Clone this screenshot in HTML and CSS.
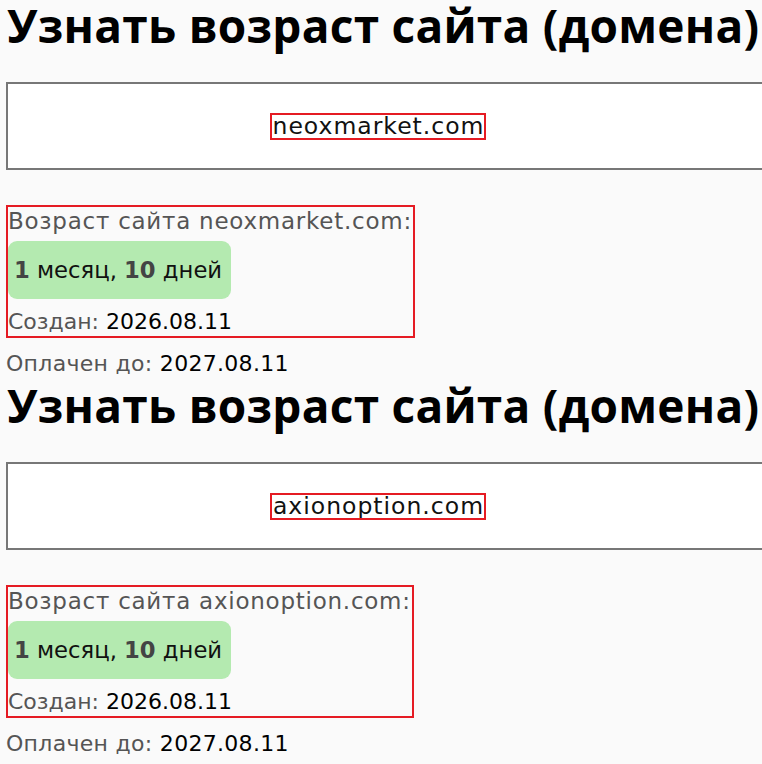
FILE: index.html
```html
<!DOCTYPE html>
<html lang="ru">
<head>
<meta charset="utf-8">
<title>Узнать возраст сайта (домена)</title>
<link rel="stylesheet" href="styles.css">
</head>
<body>
<section class="block">
  <h1 class="title">Узнать возраст сайта (домена)</h1>
  <div class="field"><span class="domain">neoxmarket.com</span></div>
  <div class="result">
    <div class="label">Возраст сайта neoxmarket.com:</div>
    <div class="age"><b class="num">1</b> месяц, <b class="num">10</b> дней</div>
    <div class="line"><span class="key">Создан:</span> <span class="val">2026.08.11</span></div>
  </div>
  <div class="line paid"><span class="key">Оплачен до:</span> <span class="val">2027.08.11</span></div>
</section>
<section class="block">
  <h1 class="title">Узнать возраст сайта (домена)</h1>
  <div class="field"><span class="domain">axionoption.com</span></div>
  <div class="result">
    <div class="label">Возраст сайта axionoption.com:</div>
    <div class="age"><b class="num">1</b> месяц, <b class="num">10</b> дней</div>
    <div class="line"><span class="key">Создан:</span> <span class="val">2026.08.11</span></div>
  </div>
  <div class="line paid"><span class="key">Оплачен до:</span> <span class="val">2027.08.11</span></div>
</section>
</body>
</html>
```

FILE: styles.css
```css
html {
  overflow: hidden;
  background: #fafafa;
}
body {
  margin: 0;
  padding: 0 0 0 6px;
  font-family: "DejaVu Sans", "Open Sans", sans-serif;
  color: #111;
}
.block {
  margin-bottom: 2px;
}
.title {
  margin: 0;
  padding-left: 1px;
  font-family: "Open Sans", "Noto Sans", sans-serif;
  font-size: 46px;
  line-height: 50px;
  letter-spacing: 0.25px;
  font-weight: 700;
  color: #000;
  white-space: nowrap;
}
.field {
  margin-top: 32px;
  width: 780px;
  height: 88px;
  box-sizing: border-box;
  border: 2px solid #777;
  background: #fff;
  padding-right: 36px;
  display: flex;
  align-items: center;
  justify-content: center;
}
.domain {
  display: inline-block;
  font-size: 23.5px;
  line-height: 23px;
  letter-spacing: 1px;
  padding: 0 0 0 1px;
  outline: 2px solid #e51b23;
  color: #111;
}
.result {
  margin-top: 35px;
  width: fit-content;
  border: 2px solid #e51b23;
  padding: 0 1px 0 0;
}
.label {
  font-size: 23px;
  line-height: 28px;
  letter-spacing: 0.75px;
  color: #555;
  white-space: nowrap;
}
.age {
  margin-top: 6px;
  width: fit-content;
  background: #b4eab0;
  border-radius: 9px;
  font-size: 22.7px;
  line-height: 58px;
  padding: 0 9px 0 6px;
  color: #111;
}
.num {
  font-weight: 700;
  color: #444;
}
.line {
  margin-top: 9px;
  font-size: 22px;
  line-height: 28px;
  white-space: nowrap;
}
.key {
  color: #555;
}
.val {
  color: #000;
}
.paid {
  margin-top: 12px;
  letter-spacing: 0.3px;
}
```
